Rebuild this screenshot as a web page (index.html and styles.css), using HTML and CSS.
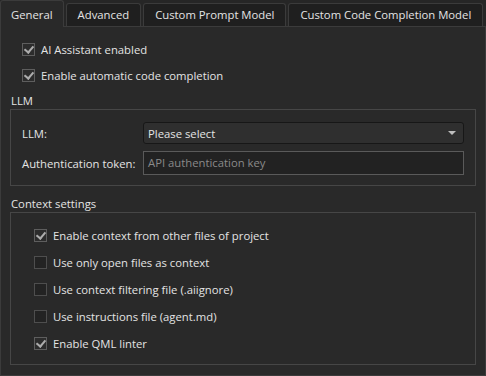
FILE: index.html
```html
<!DOCTYPE html>
<html lang="en">
<head>
    <meta charset="UTF-8">
    <title>AI Assistant Settings</title>
    <link rel="stylesheet" href="styles.css">
</head>
<body>
    <div class="tabs">
        <div class="tab active">General</div>
        <div class="tab">Advanced</div>
        <div class="tab">Custom Prompt Model</div>
        <div class="tab">Custom Code Completion Model</div>
    </div>

    <div class="panel">
        <div class="options top-options">
            <label class="option"><span class="box checked"></span>AI Assistant enabled</label>
            <label class="option"><span class="box checked"></span>Enable automatic code completion</label>
        </div>

        <div class="group-title">LLM</div>
        <div class="group llm">
            <span class="field-label">LLM:</span>
            <div class="combo">
                <span>Please select</span>
                <span class="arrow"></span>
            </div>
            <span class="field-label">Authentication token:</span>
            <div class="input placeholder">API authentication key</div>
        </div>

        <div class="group-title">Context settings</div>
        <div class="group context">
            <label class="option"><span class="box checked"></span>Enable context from other files of project</label>
            <label class="option"><span class="box"></span>Use only open files as context</label>
            <label class="option"><span class="box"></span>Use context filtering file (.aiignore)</label>
            <label class="option"><span class="box"></span>Use instructions file (agent.md)</label>
            <label class="option"><span class="box checked"></span>Enable QML linter</label>
        </div>
    </div>
</body>
</html>
```

FILE: styles.css
```css
body {
    margin: 0;
    width: 486px;
    height: 376px;
    background-color: #262626;
    color: #e4e4e4;
    font-family: "Open Sans", "Noto Sans", sans-serif;
    font-size: 11.3px;
    overflow: hidden;
}
.tabs {
    display: flex;
    align-items: flex-end;
    height: 26px;
    gap: 2px;
}
.tab {
    height: 23px;
    line-height: 22px;
    padding: 0 11px;
    background-color: #1f1f1f;
    border: 1px solid #3b3b3b;
    border-bottom: none;
    border-radius: 3px 3px 0 0;
    box-sizing: border-box;
    white-space: nowrap;
}
.tab.active {
    height: 27px;
    line-height: 27px;
    padding: 0 10px;
    margin-bottom: -1px;
    background-color: #292929;
    position: relative;
    z-index: 1;
}
.panel {
    height: 350px;
    box-sizing: border-box;
    background-color: #292929;
    border: 1px solid #3b3b3b;
    padding: 9px 9px 10px 9px;
}
.option {
    display: flex;
    align-items: center;
    height: 27px;
    gap: 6px;
}
.top-options {
    padding-left: 12px;
}
.top-options .option {
    height: 26px;
}
.box {
    width: 11px;
    height: 11px;
    border: 1px solid #4e4e4e;
    background-color: #232323;
    position: relative;
    flex-shrink: 0;
}
.box.checked {
    border-color: #5e5e5e;
    background-color: #2c2c2c;
}
.box.checked::after {
    content: "";
    position: absolute;
    left: 3px;
    top: 0px;
    width: 4px;
    height: 7px;
    border-right: 2px solid #adadad;
    border-bottom: 2px solid #adadad;
    transform: rotate(40deg);
}
.group-title {
    height: 17px;
    line-height: 17px;
    margin-top: 4px;
    padding-left: 1px;
}
.group {
    border: 1px solid #464646;
}
.llm {
    display: grid;
    grid-template-columns: 121px 1fr;
    grid-template-rows: 22px 24px;
    row-gap: 7px;
    align-items: center;
    padding: 12px 11px 10px 11px;
    margin-bottom: 9px;
}
.combo {
    height: 22px;
    box-sizing: border-box;
    display: flex;
    align-items: center;
    justify-content: space-between;
    padding: 0 7px 0 4px;
    background-color: #2f2f2f;
    border: 1px solid #171717;
    border-radius: 3px;
}
.arrow {
    width: 0;
    height: 0;
    border-left: 4px solid transparent;
    border-right: 4px solid transparent;
    border-top: 4px solid #bdbdbd;
}
.input {
    height: 24px;
    line-height: 22px;
    box-sizing: border-box;
    padding: 0 4px;
    background-color: #222222;
    border: 1px solid #5a5a5a;
}
.placeholder {
    color: #8a8a8a;
}
.context {
    padding: 9px 11px 7px 23px;
}
```
